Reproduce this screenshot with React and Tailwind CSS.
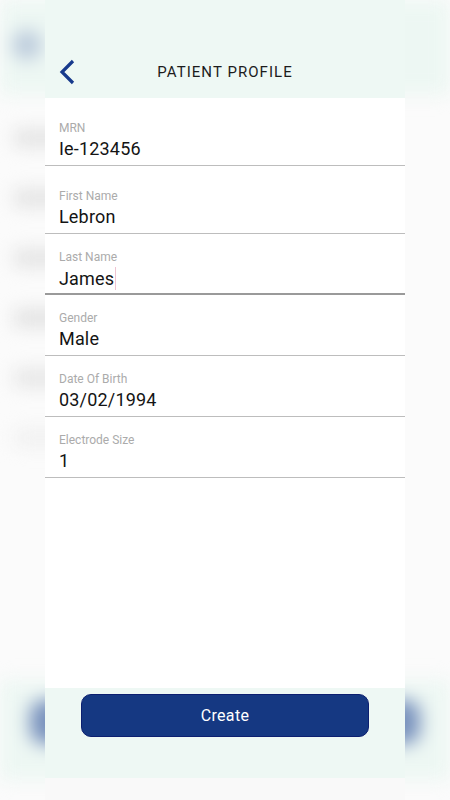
import React from "react";

const fields = [
  { label: "MRN", value: "Ie-123456", top: "pt-[23px]" },
  { label: "First Name", value: "Lebron", top: "pt-[23px]" },
  { label: "Last Name", value: "James", top: "pt-[16px]", focused: true },
  { label: "Gender", value: "Male", top: "pt-[16px]" },
  { label: "Date Of Birth", value: "03/02/1994", top: "pt-[16px]" },
  { label: "Electrode Size", value: "1", top: "pt-[16px]" },
];

const Backdrop = () => (
  <div className="absolute inset-0 blur-[9px] pointer-events-none">
    <div className="h-[95px] bg-[#edf7f3] relative">
      <div className="absolute left-[12px] top-[30px] w-[30px] h-[30px] rounded-full bg-[#bccbdc]" />
    </div>
    <div className="flex flex-col gap-[42px] pt-[34px] pl-[14px]">
      <div className="w-[60px] h-[18px] bg-[#e3e3e3]" />
      <div className="w-[60px] h-[18px] bg-[#e3e3e3]" />
      <div className="w-[60px] h-[18px] bg-[#e3e3e3]" />
      <div className="w-[60px] h-[18px] bg-[#e1e1e1]" />
      <div className="w-[60px] h-[18px] bg-[#e5e5e5]" />
      <div className="w-[60px] h-[18px] bg-[#f0f0f0]" />
    </div>
    <div className="absolute left-0 right-0 top-[680px] h-[100px] bg-[#edf7f3]">
      <div className="mx-[30px] mt-[20px] h-[44px] rounded-[14px] bg-[#7891bd]" />
    </div>
  </div>
);

export default function App() {
  return (
    <div
      className="relative w-full h-[800px] overflow-hidden bg-[#fbfbfb]"
      style={{ fontFamily: "Roboto, 'Liberation Sans', sans-serif" }}
    >
      <Backdrop />
      <div className="relative mx-[45px] h-full flex flex-col">
        <header className="h-[98px] bg-[#eef8f4] pt-[50px] shrink-0">
          <div className="h-[44px] flex items-center px-[14px]">
            <svg width="18" height="26" viewBox="0 0 18 26" className="shrink-0">
              <path d="M14 2 L3 13 L14 24" fill="none" stroke="#173a8c" strokeWidth="3.2" />
            </svg>
            <h1 className="flex-1 text-center pr-[18px] text-[15px] tracking-[0.07em] text-[#1c1c1c]">
              PATIENT PROFILE
            </h1>
          </div>
        </header>

        <main className="flex-1 bg-white">
          {fields.map((f) => (
            <div
              key={f.label}
              className={`${f.top} pl-[14px] ${
                f.focused
                  ? "pb-[3px] border-b-2 border-[#9a9a9a]"
                  : "pb-[5px] border-b border-[#bdbdbd]"
              }`}
            >
              <div className="text-[12px] leading-[14px] text-[#ababab]">{f.label}</div>
              <div className="mt-[3px] text-[18px] leading-[22px] tracking-[0.01em] text-[#141414] flex items-center">
                {f.value}
                {f.focused && <span className="ml-[1px] w-px h-[23px] bg-[#f0c4d2]" />}
              </div>
            </div>
          ))}
        </main>

        <footer className="h-[90px] bg-[#eef8f4] pt-[6px] px-[36px] shrink-0">
          <button className="w-full h-[43px] rounded-[10px] bg-[#153882] border border-[#0c1f70] text-white text-[16px] tracking-[0.02em] pt-[1px]">
            Create
          </button>
        </footer>
        <div className="h-[22px] bg-[#f9f9f9] shrink-0" />
      </div>
    </div>
  );
}
